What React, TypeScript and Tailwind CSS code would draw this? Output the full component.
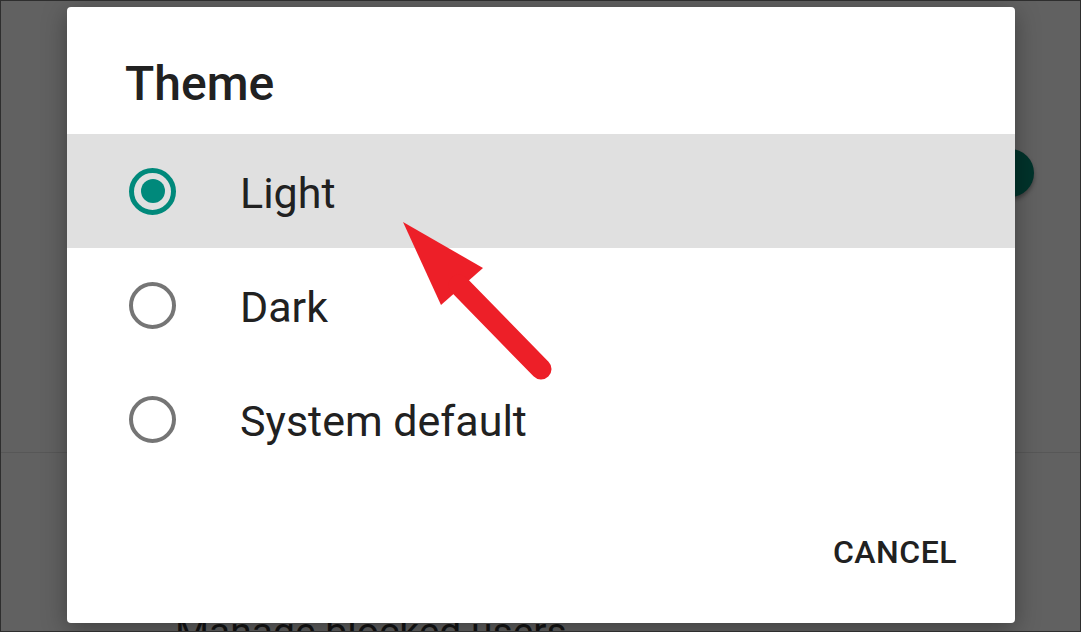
const options = [
  { label: "Light", checked: true },
  { label: "Dark", checked: false },
  { label: "System default", checked: false },
];

const Radio = ({ checked }: { checked: boolean }) =>
  checked ? (
    <div className="flex h-[47px] w-[47px] shrink-0 items-center justify-center rounded-full border-[5px] border-[#00897b]">
      <div className="h-[24px] w-[24px] rounded-full bg-[#00897b]" />
    </div>
  ) : (
    <div className="h-[47px] w-[47px] shrink-0 rounded-full border-[4px] border-[#757575]" />
  );

export default function App() {
  return (
    <div
      className="relative h-[632px] w-full overflow-hidden border border-[#2e2e2e] bg-[#616161]"
      style={{ fontFamily: "Roboto, 'Noto Sans', sans-serif" }}
    >
      {/* dimmed settings page behind the dialog */}
      <div className="flex flex-col">
        <div className="flex h-[451px] justify-end pr-[46px] pt-[148px]">
          <div className="h-[48px] w-[48px] rounded-full bg-[#00332b] shadow-[0_3px_4px_rgba(0,0,0,0.35)]" />
        </div>
        <div className="h-px bg-[#575757]" />
        <div className="pl-[174px] pt-[160px] text-[39px] leading-none text-[#141414]">
          Manage blocked users
        </div>
      </div>

      {/* dialog */}
      <div className="absolute left-[66px] top-[6px] flex h-[616px] w-[948px] flex-col rounded-[4px] bg-white shadow-[0_6px_24px_rgba(0,0,0,0.35)]">
        <div className="h-[127px] pl-[58px] pt-[53px]">
          <h2 className="text-[48px] font-medium leading-[48px] text-[#212121]">Theme</h2>
        </div>

        {options.map((option) => (
          <div
            key={option.label}
            className={`flex h-[114px] items-center pl-[62px] ${option.checked ? "bg-[#e0e0e0]" : ""}`}
          >
            <Radio checked={option.checked} />
            <span className="ml-[64px] pt-[5px] text-[43px] leading-[43px] text-[#212121]">
              {option.label}
            </span>
          </div>
        ))}

        <div className="flex flex-1 items-end justify-end pb-[55px] pr-[58px]">
          <span className="text-[32px] font-medium leading-[32px] tracking-[0.5px] text-[#212121]">
            CANCEL
          </span>
        </div>
      </div>

      {/* red annotation arrow */}
      <svg className="pointer-events-none absolute left-0 top-0" width="1081" height="632" viewBox="0 0 1081 632">
        <polygon points="402,221 440,304 482,267" fill="#ed1f28" />
        <line x1="458" y1="284" x2="540" y2="368" stroke="#ed1f28" strokeWidth="21" strokeLinecap="round" />
      </svg>
    </div>
  );
}
